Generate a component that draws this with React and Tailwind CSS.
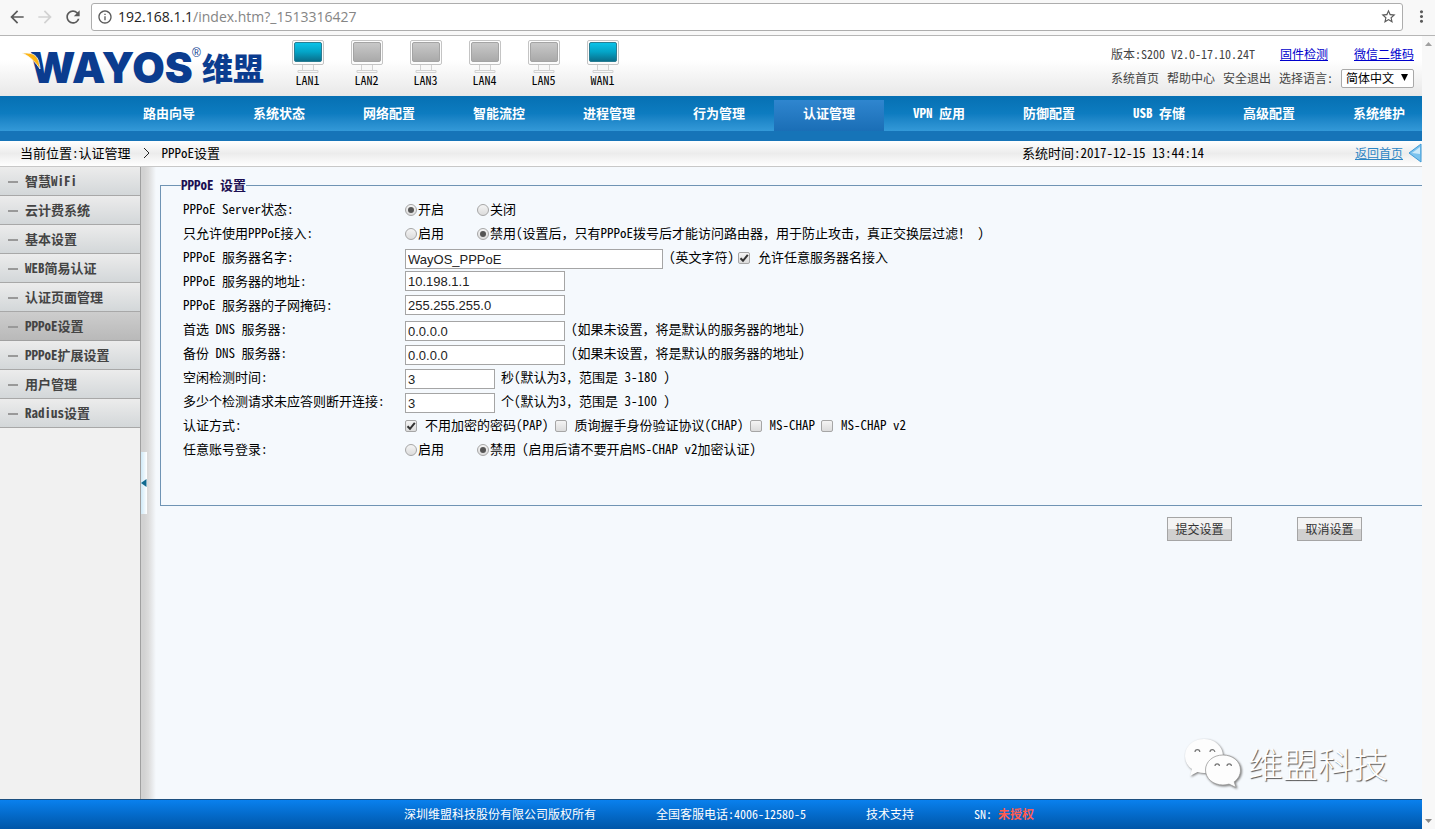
import { useState } from "react";
import {
  MdArrowBack,
  MdArrowForward,
  MdInfoOutline,
  MdMoreVert,
  MdRefresh,
  MdStarBorder,
} from "react-icons/md";

const PORTS = [
  { name: "LAN1", up: true },
  { name: "LAN2", up: false },
  { name: "LAN3", up: false },
  { name: "LAN4", up: false },
  { name: "LAN5", up: false },
  { name: "WAN1", up: true },
];

const NAV = [
  "路由向导",
  "系统状态",
  "网络配置",
  "智能流控",
  "进程管理",
  "行为管理",
  "认证管理",
  "VPN 应用",
  "防御配置",
  "USB 存储",
  "高级配置",
  "系统维护",
];

const MENU = [
  "智慧WiFi",
  "云计费系统",
  "基本设置",
  "WEB简易认证",
  "认证页面管理",
  "PPPoE设置",
  "PPPoE扩展设置",
  "用户管理",
  "Radius设置",
];

export default function App() {
  return (
    <div className="flex min-h-screen flex-col bg-white font-['Noto_Sans_Mono_CJK_SC','Noto_Sans_CJK_SC',monospace] text-[13px] leading-4 text-black">
      <BrowserBar />
      <div className="flex flex-1">
        <div className="flex min-w-0 flex-1 flex-col overflow-hidden">
          <Header />
          <Nav />
          <Breadcrumb />
          <div className="flex flex-1 bg-[#f5f9fd]">
            <Sidebar />
            <Splitter />
            <main className="relative min-w-0 flex-1 pt-[9px] pl-1">
              <PppoeForm />
              <Watermark />
            </main>
          </div>
          <Footer />
        </div>
        {/* Scroll bar */}
        <div className="flex w-[13px] shrink-0 flex-col items-center justify-between bg-[#f8f8f8] py-[6px]">
          <svg width="7" height="4" viewBox="0 0 7 4">
            <path d="M0 4 3.5 0 7 4z" fill="#a0a0a0" />
          </svg>
          <svg width="7" height="4" viewBox="0 0 7 4">
            <path d="M0 0h7L3.5 4z" fill="#888" />
          </svg>
        </div>
      </div>
    </div>
  );
}

function BrowserBar() {
  return (
    <div className="flex h-9 items-center border-b border-[#b6b6b6] bg-[#f8f8f8] pr-1 pb-[2px] pl-[7px] text-[#5a5a5a]">
      <button aria-label="后退">
        <MdArrowBack size={20} />
      </button>
      <button aria-label="前进" className="ml-2 text-[#d2d2d2]">
        <MdArrowForward size={20} />
      </button>
      <button aria-label="刷新" className="ml-2">
        <MdRefresh size={20} />
      </button>
      <div className="ml-2 flex h-7 flex-1 items-center rounded-[3px] border border-[#adadad] bg-white px-[5px]">
        <MdInfoOutline size={16} />
        <span className="ml-[5px] flex-1 font-['Open_Sans',sans-serif] text-sm text-[#858585]">
          <span className="text-[#222]">192.168.1.1</span>
          /index.htm?_1513316427
        </span>
        <button aria-label="收藏">
          <MdStarBorder size={17} />
        </button>
      </div>
      <button aria-label="菜单" className="ml-[9px]">
        <MdMoreVert size={19} />
      </button>
    </div>
  );
}

function Header() {
  return (
    <header className="flex h-[60px] items-start bg-linear-to-b from-white from-40% to-[#e8e8e8] pr-2 pl-[22px]">
      <Logo />
      <div className="ml-[14px] flex pt-1">
        {PORTS.map((port) => (
          <div key={port.name} className="flex w-[59px] flex-col items-center text-xs leading-[14px]">
            <Monitor on={port.up} />
            {port.name}
          </div>
        ))}
      </div>
      <div className="ml-auto flex flex-col gap-1 pt-2 text-xs leading-5 text-[#444]">
        <div className="flex justify-between">
          <span>版本:S200 V2.0-17.10.24T</span>
          <span className="flex gap-[26px] text-[#0000cc]">
            <a href="#firmware" className="underline">固件检测</a>
            <a href="#wechat" className="underline">微信二维码</a>
          </span>
        </div>
        <div className="flex items-center gap-2">
          <a href="#home">系统首页</a>
          <a href="#help">帮助中心</a>
          <a href="#logout">安全退出</a>
          <label htmlFor="lang">选择语言:</label>
          <span className="relative">
            <select
              id="lang"
              className="block h-[19px] w-[73px] appearance-none rounded-xs border border-[#a9a9a9] bg-white pl-1 text-xs leading-4 text-black"
            >
              <option>简体中文</option>
              <option>English</option>
            </select>
            <svg width="7" height="7" viewBox="0 0 7 7" className="pointer-events-none absolute top-[5px] right-[6px]">
              <path d="M0 0h7L3.5 7z" />
            </svg>
          </span>
        </div>
      </div>
    </header>
  );
}

function Logo() {
  return (
    <div className="relative flex h-[60px] w-[242px] items-center pt-1 pl-[8px] text-[#0b3c8f]">
      <span className="font-['Inter',sans-serif] text-[42px] leading-none font-black">WAYOS</span>
      <span className="absolute top-[9px] left-[170px] font-['Liberation_Sans',sans-serif] text-xs">®</span>
      <span className="absolute top-[15px] left-[180px] font-['Noto_Sans_CJK_SC',sans-serif] text-[31px] leading-8 font-black">
        维盟
      </span>
      <svg width="20" height="20" viewBox="0 0 20 20" className="absolute top-[15px] left-0">
        <path d="M0 2C8 2 17 1 18 18 14 12 9 6 0 2z" fill="#fdb515" stroke="#fafafa" strokeWidth=".8" />
      </svg>
    </div>
  );
}

function Monitor({ on }) {
  return (
    <svg width="32" height="33" viewBox="0 0 32 33">
      <defs>
        <linearGradient id="screen-on" x1="0" y1="0" x2="0" y2="1">
          <stop offset="0" stopColor="#0cc4ea" />
          <stop offset=".5" stopColor="#04a3c6" />
          <stop offset="1" stopColor="#0a6c88" />
        </linearGradient>
        <linearGradient id="screen-off" x1="0" y1="0" x2="0" y2="1">
          <stop offset="0" stopColor="#c9c9c9" />
          <stop offset="1" stopColor="#a9a9a9" />
        </linearGradient>
      </defs>
      <path d="M10.5 24v6.500h11V24M6 32.500v-2h20v2z" fill="#f8f8f8" stroke="#d2d2d2" />
      <rect x=".5" y=".5" width="31" height="24" rx="1.5" fill="#fcfcfc" stroke="#c4c4c4" />
      <rect
        x="2.5"
        y="2.5"
        width="27"
        height="19"
        rx="1.5"
        fill={on ? "url(#screen-on)" : "url(#screen-off)"}
        stroke={on ? "#2a7e94" : "#a4a4a4"}
      />
    </svg>
  );
}

function Nav() {
  return (
    <nav className="border-b-10 border-[#1674b8] bg-linear-to-b from-[#0670b3] via-[#0d7cc0] to-[#3399d8] pl-[114px]">
      <ul className="flex pt-1">
        {NAV.map((item) => (
          <li key={item} className="w-[110px] shrink-0">
            <a
              href="#nav"
              className={
                item === "认证管理"
                  ? "block bg-linear-to-b from-[#2f86cf] to-[#1a6eb6] pt-[5px] pb-[10px] text-center font-bold text-white"
                  : "block pt-[5px] pb-[10px] text-center font-bold text-white"
              }
            >
              {item}
            </a>
          </li>
        ))}
      </ul>
    </nav>
  );
}

function Breadcrumb() {
  return (
    <div className="flex h-[26px] items-center border-b border-[#c8c8c8] bg-linear-to-b from-white via-[#ececec] to-white pb-px pl-5">
      <span>当前位置:认证管理</span>
      <svg width="7" height="10" viewBox="0 0 7 10" className="mx-3" fill="none" stroke="#222">
        <path d="M1 0 6 5 1 10" />
      </svg>
      <span className="flex-1">PPPoE设置</span>
      <span>系统时间:2017-12-15 13:44:14</span>
      <a href="#home" className="ml-[151px] text-xs text-[#2d86c4] underline">返回首页</a>
      <svg width="14" height="20" viewBox="0 0 14 20" className="ml-[5px]">
        <path d="M13 1v18L1 10z" fill="#7cc3ee" stroke="#3f9ad6" />
        <path d="M12 4v7L4 10z" fill="#cbe9fa" />
      </svg>
    </div>
  );
}

function Sidebar() {
  const [active, setActive] = useState("PPPoE设置");

  return (
    <aside className="w-[141px] shrink-0 border-r border-[#a0a0a0] bg-[#f1f1f1]">
      <ul>
        {MENU.map((item) => (
          <li key={item}>
            <button
              onClick={() => setActive(item)}
              className={
                item === active
                  ? "flex h-[29px] w-full items-center gap-[7px] border-b border-[#a0a0a0] bg-linear-to-b from-[#cdcdcd] to-[#b9b9b9] pl-2 font-bold text-[#444]"
                  : "flex h-[29px] w-full items-center gap-[7px] border-b border-[#a8a8a8] bg-linear-to-b from-[#ececec] to-[#d3d7d9] pl-2 font-bold text-[#444]"
              }
            >
              <span className="mt-[2px] h-[2px] w-[10px] bg-[#999]" />
              {item}
            </button>
          </li>
        ))}
      </ul>
    </aside>
  );
}

function Splitter() {
  return (
    <div className="flex w-[15px] shrink-0 items-center bg-linear-to-r from-[#d2d2d2] from-20% via-[#dcdcdc] to-[#f5f9fd]">
      <button aria-label="收起菜单" className="flex h-[62px] w-[6px] items-center bg-linear-to-r from-[#cfe9f7] to-white">
        <svg width="6" height="8" viewBox="0 0 6 8">
          <path d="M5.5 0v8L0 4z" fill="#10698f" />
        </svg>
      </button>
    </div>
  );
}

function PppoeForm() {
  return (
    <form onSubmit={(e) => e.preventDefault()}>
      <fieldset className="border border-r-0 border-[#6f94b4] pt-[3px] pb-11 pl-[22px]">
        <legend className="-ml-[2px] h-[18px] leading-[18px] font-bold text-[#1c0f52]">PPPoE 设置</legend>

        <Row label="PPPoE Server状态:">
          <Radio name="server" label="开启" defaultChecked />
          <Radio name="server" label="关闭" />
        </Row>
        <Row label="只允许使用PPPoE接入:">
          <Radio name="only" label="启用" />
          <Radio name="only" label="禁用" defaultChecked />
          <span>
            (设置后，只有PPPoE拨号后才能访问路由器，用于防止攻击，真正交换层过滤！ )
          </span>
        </Row>
        <Row label="PPPoE 服务器名字:" htmlFor="name">
          <TextBox id="name" value="WayOS_PPPoE" width="w-[258px]" hint="(英文字符)" />
          <span className="ml-1">
            <Check label="允许任意服务器名接入" defaultChecked />
          </span>
        </Row>
        <Row label="PPPoE 服务器的地址:" htmlFor="addr">
          <TextBox id="addr" value="10.198.1.1" width="w-[160px]" />
        </Row>
        <Row label="PPPoE 服务器的子网掩码:" htmlFor="mask">
          <TextBox id="mask" value="255.255.255.0" width="w-[160px]" />
        </Row>
        <Row label="首选 DNS 服务器:" htmlFor="dns1">
          <TextBox id="dns1" value="0.0.0.0" width="w-[160px]" hint="(如果未设置，将是默认的服务器的地址)" />
        </Row>
        <Row label="备份 DNS 服务器:" htmlFor="dns2">
          <TextBox id="dns2" value="0.0.0.0" width="w-[160px]" hint="(如果未设置，将是默认的服务器的地址)" />
        </Row>
        <Row label="空闲检测时间:" htmlFor="idle">
          <TextBox id="idle" value="3" width="w-[90px]" hint="秒(默认为3, 范围是 3-180 )" />
        </Row>
        <Row label="多少个检测请求未应答则断开连接:" htmlFor="retry">
          <TextBox id="retry" value="3" width="w-[90px]" hint="个(默认为3, 范围是 3-100 )" />
        </Row>
        <Row label="认证方式:">
          <div className="flex gap-[6px]">
            <Check label="不用加密的密码(PAP)" defaultChecked />
            <Check label="质询握手身份验证协议(CHAP)" />
            <Check label="MS-CHAP" />
            <Check label="MS-CHAP v2" />
          </div>
        </Row>
        <Row label="任意账号登录:">
          <Radio name="any" label="启用" />
          <Radio name="any" label="禁用" defaultChecked />
          <span className="ml-[6px]">(启用后请不要开启MS-CHAP v2加密认证)</span>
        </Row>
      </fieldset>

      <div className="flex justify-end gap-[65px] pt-[11px] pr-[60px]">
        <FormButton type="submit">提交设置</FormButton>
        <FormButton type="reset">取消设置</FormButton>
      </div>
    </form>
  );
}

function Row({ label, htmlFor, children }) {
  return (
    <div className="flex h-6 items-center whitespace-nowrap">
      {htmlFor ? (
        <label htmlFor={htmlFor} className="w-[222px] shrink-0">{label}</label>
      ) : (
        <span className="w-[222px] shrink-0">{label}</span>
      )}
      {children}
    </div>
  );
}

function Radio({ name, label, defaultChecked }) {
  return (
    <label className="flex shrink-0 items-center gap-px first-of-type:w-[72px]">
      <input
        type="radio"
        name={name}
        defaultChecked={defaultChecked}
        className="mt-[2px] grid size-3 appearance-none place-content-center rounded-full border border-[#a6a6a6] bg-linear-to-b from-[#f4f4f4] to-[#dcdcdc] checked:before:size-[6px] checked:before:rounded-full checked:before:bg-[#555] checked:before:content-['']"
      />
      {label}
    </label>
  );
}

function Check({ label, defaultChecked }) {
  return (
    <label className="flex shrink-0 items-center gap-2">
      <span className="mt-[2px] grid">
        <input
          type="checkbox"
          defaultChecked={defaultChecked}
          className="peer col-start-1 row-start-1 size-3 appearance-none rounded-xs border border-[#a6a6a6] bg-linear-to-b from-[#f4f4f4] to-[#dcdcdc]"
        />
        <svg
          viewBox="0 0 12 12"
          className="pointer-events-none invisible col-start-1 row-start-1 size-3 peer-checked:visible"
          fill="none"
          stroke="#333"
          strokeWidth="2"
        >
          <path d="M2.5 6.2 5 8.8 9.8 2.8" />
        </svg>
      </span>
      {label}
    </label>
  );
}

function TextBox({ id, value, width, hint }) {
  return (
    <>
      <input
        id={id}
        type="text"
        defaultValue={value}
        className={`${width} ${hint ? "self-end" : ""} h-5 border border-[#a5a5a5] bg-white px-[2px] font-['Liberation_Sans',Arial,sans-serif] text-[13px] text-[#222]`}
      />
      {hint && <span className="ml-[6px]">{hint}</span>}
    </>
  );
}

function FormButton({ type, children }) {
  return (
    <button
      type={type}
      className="h-6 w-[65px] border border-[#a5a5a5] bg-linear-to-b from-[#f3f3f3] from-50% to-[#d0d0d0] to-50% text-xs text-[#333]"
    >
      {children}
    </button>
  );
}

function Watermark() {
  return (
    <div className="pointer-events-none absolute right-[34px] bottom-[11px] flex items-center gap-[6px]">
      <svg width="58" height="50" viewBox="0 0 58 50" className="drop-shadow-[1px_1px_1px_#777]">
        <path
          d="M20 1C9 1 1 8.5 1 18c0 5.500 2.600 10 7 13l-2 7 7.500-4c2.200.6 4.300 1 6.500 1 11 0 19-7.500 19-17S31 1 20 1z"
          fill="#fdfdfd"
        />
        <path
          d="M39 17c-10 0-17.500 6.600-17.500 15S29 47 39 47c2 0 4-.3 6-.9l7 3.400-1.800-5.700c4-2.800 6.300-7 6.300-11.800C56.500 23.600 49 17 39 17z"
          fill="#fdfdfd"
          stroke="#999"
          strokeWidth=".8"
        />
        <g fill="none" stroke="#777" strokeWidth="1.2">
          <path d="M11 14a2.400 2.400 0 0 1 4.800 0M26 14a2.400 2.400 0 0 1 4.800 0M31 28a2.200 2.200 0 0 1 4.400 0M43 28a2.200 2.200 0 0 1 4.400 0" />
        </g>
      </svg>
      <span className="font-['Noto_Sans_CJK_SC',sans-serif] text-[35px] leading-[50px] font-light text-white [text-shadow:1px_1px_1px_#555]">
        维盟科技
      </span>
    </div>
  );
}

function Footer() {
  return (
    <footer className="flex h-[30px] items-center justify-center gap-[60px] border-t border-[#1c4f80] bg-linear-to-b from-[#0a80ee] to-[#0056a8] pb-px pl-4 text-xs text-white">
      <span>深圳维盟科技股份有限公司版权所有</span>
      <span>全国客服电话:4006-12580-5</span>
      <span>技术支持</span>
      <span>
        SN: <b className="text-[#ff5c50]">未授权</b>
      </span>
    </footer>
  );
}
